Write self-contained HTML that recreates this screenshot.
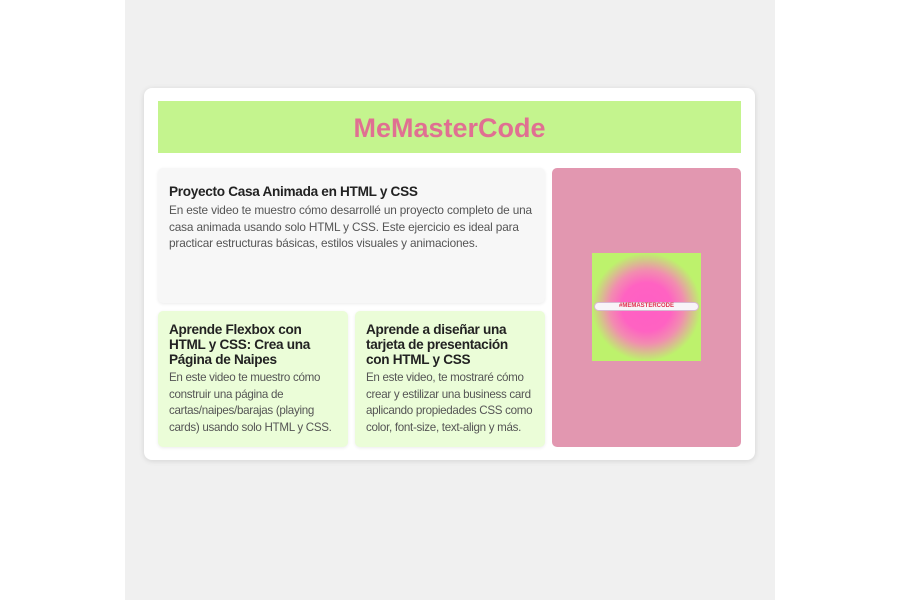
<!DOCTYPE html>
<html><head><meta charset="utf-8"><style>
*{margin:0;padding:0;box-sizing:border-box}
body{width:900px;height:600px;background:#fff;font-family:"Liberation Sans",Arial,sans-serif;position:relative;overflow:hidden}
.col{position:absolute;left:125px;top:0;width:650px;height:600px;background:#f0f0f0}
.card{position:absolute;left:144px;top:88px;width:611px;height:372px;background:#fff;border-radius:8px;box-shadow:0 1px 6px rgba(0,0,0,.12)}
.hdr{position:absolute;left:158px;top:101px;width:583px;height:52px;background:#c4f48e;color:#e07092;font-weight:bold;font-size:27px;text-align:center;line-height:54px}
.box{position:absolute;border-radius:5px;box-shadow:0 1px 3px rgba(0,0,0,.08);padding:14px 11px;white-space:nowrap;overflow:hidden}
.big{left:158px;top:168px;width:387px;height:135px;background:#f7f7f7}
.s1{left:158px;top:311px;width:190px;height:136px;background:#ebfdd8;padding-top:10px}
.s2{left:355px;top:311px;width:190px;height:136px;background:#ebfdd8;padding-top:10px}
h2{font-size:13.6px;letter-spacing:-0.3px;color:#222;line-height:15px;margin-top:1px;margin-bottom:3px}
.big h2{margin-top:2px;margin-bottom:3px}
p{font-size:11.8px;letter-spacing:-0.15px;color:#555;line-height:16.7px}
.s1 p,.s2 p{font-size:11.6px;letter-spacing:-0.3px}
.pink{position:absolute;left:552px;top:168px;width:189px;height:279px;background:#e297b0;border-radius:5px}
.img{position:absolute;left:592px;top:253px;width:109px;height:108px;background:radial-gradient(closest-side,#ff5fc4 0,#ff62c2 45%,#f28cb0 68%,#bdf26c 100%)}
.bar{position:absolute;left:594px;top:302px;width:105px;height:9px;background:#f8f4f8;border-radius:5px;border:1px solid #d8b8d0;font-size:6px;color:#e03050;text-align:center;line-height:7px;font-weight:bold}
</style></head><body>
<div class="col"></div>
<div class="card"></div>
<div class="hdr">MeMasterCode</div>
<div class="box big"><h2>Proyecto Casa Animada en HTML y CSS</h2><p>En este video te muestro cómo desarrollé un proyecto completo de una<br>casa animada usando solo HTML y CSS. Este ejercicio es ideal para<br>practicar estructuras básicas, estilos visuales y animaciones.</p></div>
<div class="box s1"><h2>Aprende Flexbox con<br>HTML y CSS: Crea una<br>Página de Naipes</h2><p>En este video te muestro cómo<br>construir una página de<br>cartas/naipes/barajas (playing<br>cards) usando solo HTML y CSS.</p></div>
<div class="box s2"><h2>Aprende a diseñar una<br>tarjeta de presentación<br>con HTML y CSS</h2><p>En este video, te mostraré cómo<br>crear y estilizar una business card<br>aplicando propiedades CSS como<br>color, font-size, text-align y más.</p></div>
<div class="pink"></div>
<div class="img"></div>
<div class="bar">#MEMASTERCODE</div>
</body></html>
